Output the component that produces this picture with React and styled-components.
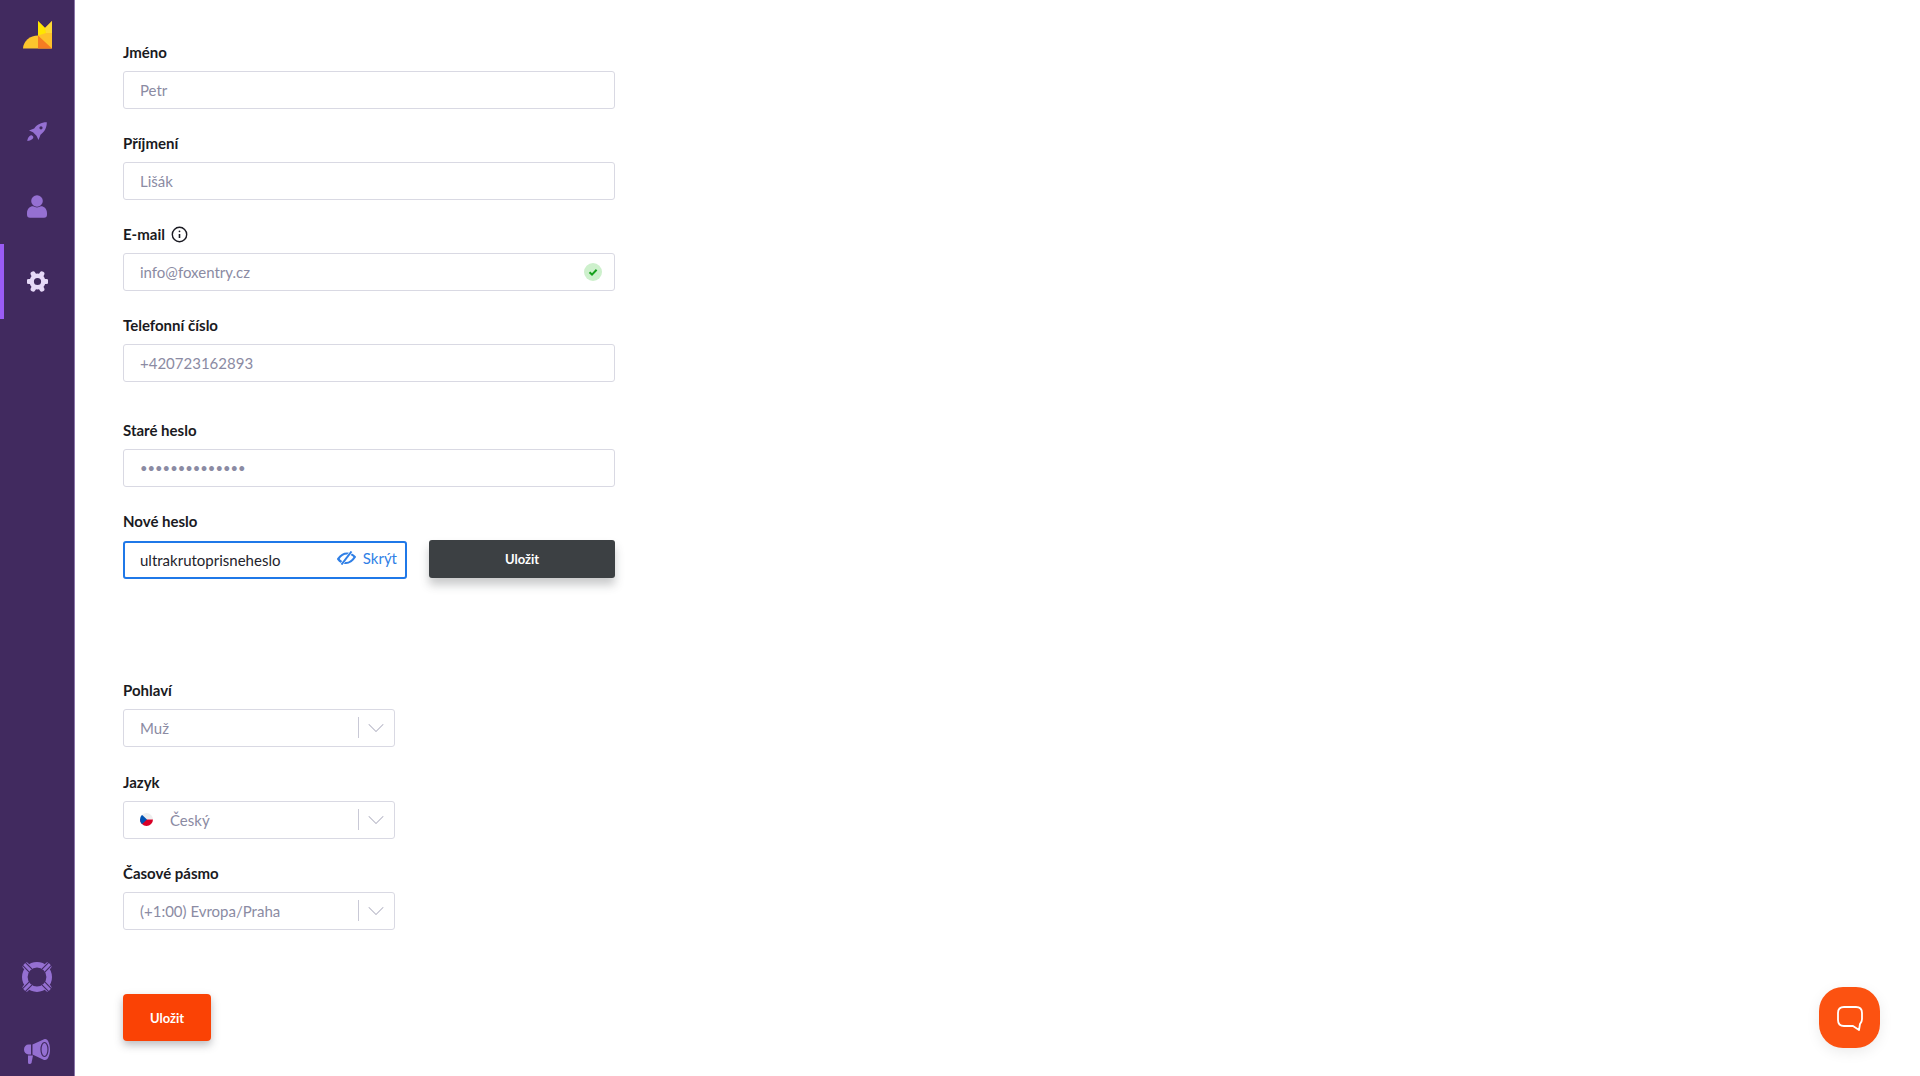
import React from 'react';
import styled, { createGlobalStyle } from 'styled-components';
import { ChevronDown } from 'lucide-react';

const GlobalStyle = createGlobalStyle`
  html, body {
    margin: 0;
    padding: 0;
    background: #fff;
    overflow: hidden;
  }
  * {
    box-sizing: border-box;
  }
`;

const Page = styled.div`
  display: flex;
  height: 1076px;
  overflow: hidden;
  font-family: 'Lato', 'Open Sans', sans-serif;
  position: relative;
`;

const Sidebar = styled.nav`
  width: 75px;
  height: 1089px;
  flex-shrink: 0;
  display: flex;
  flex-direction: column;
  background: #412a5f;
  border-right: 1px solid #8a75a8;
`;

const LogoBox = styled.div`
  height: 94px;
  padding: 21px 0 0 23px;
`;

const NavItem = styled.div`
  height: 75px;
  display: flex;
  align-items: center;
  justify-content: center;
  border-left: 4px solid ${(p) => (p.$active ? '#9a5cf5' : 'transparent')};
  padding-right: 4px;
`;

const NavBottom = styled.div`
  margin-top: auto;
`;

const Main = styled.main`
  flex: 1;
  padding: 42px 0 0 48px;
`;

const Group = styled.div`
  width: 492px;
`;

const Field = styled.div`
  margin-bottom: ${(p) => p.$gap || 23}px;
`;

const Label = styled.label`
  display: flex;
  align-items: center;
  gap: 6px;
  height: 20px;
  margin-bottom: 9px;
  font-size: 15px;
  font-weight: 700;
  color: #1a1a22;
`;

const InputBox = styled.div`
  height: 38px;
  width: ${(p) => p.$width || '100%'};
  display: flex;
  align-items: center;
  padding: 0 12px 1px ${(p) => (p.$focus ? 15 : 16)}px;
  background: #fff;
  border: ${(p) => (p.$focus ? '2px solid #1f78e8' : '1px solid #d9d9e3')};
  border-radius: 3px;
  font-size: 15px;
  color: ${(p) => (p.$focus ? '#23232b' : '#8b8ba3')};
`;

const Grow = styled.span`
  flex: 1;
`;

const Dots = styled.span`
  flex: 1;
  font-size: 13px;
  color: #8b8ba3;
`;

const ToggleText = styled.span`
  display: flex;
  align-items: center;
  gap: 7px;
  color: #2f7fe6;
  margin: -3px -4px 0 0;
`;

const PasswordRow = styled.div`
  display: flex;
  align-items: flex-end;
  justify-content: space-between;
`;

const DarkButton = styled.button`
  width: 186px;
  height: 38px;
  margin-bottom: 1px;
  border: none;
  border-radius: 3px;
  background: #3c4043;
  color: #fff;
  font: 700 13px 'Lato', sans-serif;
  box-shadow: 0 7px 10px rgba(60, 64, 67, 0.28);
`;

const SelectBox = styled(InputBox)`
  width: 272px;
  padding-right: 0;
`;

const FlagWrap = styled.span`
  display: flex;
  margin-right: 17px;
`;

const Divider = styled.span`
  width: 1px;
  height: 21px;
  background: #c9c9d6;
`;

const Arrow = styled.span`
  width: 35px;
  padding-right: 2px;
  display: flex;
  justify-content: center;
  color: #b4b4c4;
`;

const SaveButton = styled.button`
  width: 88px;
  height: 47px;
  border: none;
  border-radius: 4px;
  background: #fa4205;
  color: #fff;
  font: 700 13px 'Lato', sans-serif;
  box-shadow: 0 4px 9px rgba(60, 60, 70, 0.35);
`;

const ChatBubble = styled.div`
  position: absolute;
  left: 1819px;
  top: 987px;
  width: 61px;
  height: 61px;
  border-radius: 24px;
  background: #fc5211;
  display: flex;
  align-items: center;
  justify-content: center;
  box-shadow: 0 4px 14px rgba(0, 0, 0, 0.08);
`;

const Logo = () => (
  <svg width="30" height="28" viewBox="0 0 30 28">
    <path d="M0 27.5 A15 13.5 0 0 1 15 14.5 V27.5 Z" fill="#fcc52d" />
    <path d="M15 0 L22 7 L29 0 V27.5 H15 Z" fill="#fdc12a" />
    <path d="M15 0 L22 7 L23 12 L15 14.5 Z" fill="#ffe600" />
    <path d="M22 7 L29 0 V12 L23 12 Z" fill="#fdd835" />
    <path d="M15 14.5 L29 27.5 H15 Z" fill="#f57c22" />
  </svg>
);

const Rocket = () => (
  <svg width="20" height="21" viewBox="0 0 20 19" fill="#9570d2" fillRule="evenodd">
    <path d="M19.8 .3 C19.9 5.5 17.5 10 13.5 12.8 L11.5 18 L9.5 13.8 L6 10.3 L2 8.5 L7.2 6.5 C10 2.5 14.5 .2 19.8 .3 Z M14 4.2 A1.6 1.6 0 1 0 14 7.4 A1.6 1.6 0 1 0 14 4.2 Z" />
    <path d="M5 13.5 C6.5 14.5 6.8 15.6 5.5 17 C4 18.3 1.8 18.8 .3 19 C.4 17.4 1 15.6 2.4 14.2 C3.3 13.4 4.2 13.2 5 13.5 Z" />
  </svg>
);

const UserIcon = () => (
  <svg width="20" height="23" viewBox="0 0 20 23" fill="#9570d2">
    <circle cx="10" cy="6" r="5.8" />
    <path d="M0 18 C0 14 3 11.3 6 11.3 Q10 13.5 14 11.3 C17 11.3 20 14 20 18 V19.5 Q20 22.7 17 22.7 H3 Q0 22.7 0 19.5 Z" />
  </svg>
);

const Gear = () => (
  <svg width="21" height="21" viewBox="0 0 24 24" fill="none" stroke="#e6d9f7">
    {[0, 60, 120].map((angle) => (
      <path key={angle} d="M12 1.8 V22.2" strokeWidth="5.6" strokeLinecap="round" transform={`rotate(${angle + 90} 12 12)`} />
    ))}
    <circle cx="12" cy="12" r="6.6" fill="#412a5f" strokeWidth="5" />
  </svg>
);

const Lifebuoy = () => (
  <svg width="32" height="32" viewBox="0 0 32 32" fill="none">
    <circle cx="16" cy="16" r="12.2" stroke="#9570d2" strokeWidth="5.6" />
    {[45, 135, 225, 315].map((angle) => (
      <g key={angle} transform={`rotate(${angle} 16 16)`}>
        <rect x="12.5" y="-2.2" width="7" height="5" rx="2" fill="#9570d2" />
        <path d="M14 -3 V7 M18 -3 V7" stroke="#412a5f" strokeWidth="1.1" />
      </g>
    ))}
  </svg>
);

const Megaphone = () => (
  <svg width="26" height="25" viewBox="0 0 26 25" fill="#9570d2">
    <path d="M7 5.5 H4.5 A4.5 5 0 0 0 4.5 15.5 H7 Z" />
    <path d="M8.5 5.5 L19 .7 Q20 .2 21 .1 C24 0 26 5 26 10.5 C26 16 24 21 21 21 Q20 21 19 20.4 L8.5 15.5 Z" />
    <ellipse cx="20.5" cy="10.5" rx="3.5" ry="7" fill="none" stroke="#412a5f" strokeWidth="1.2" />
    <path d="M4 16.5 H9 L7.5 24 Q7 25 5.5 25 Q4 25 4 23.5 Z" />
  </svg>
);

const Info = () => (
  <svg width="17" height="17" viewBox="0 0 17 17" fill="none" stroke="#1a1a22" strokeWidth="1.4">
    <circle cx="8.5" cy="8.5" r="7.2" />
    <path d="M8.5 8 V12" strokeWidth="1.6" />
    <circle cx="8.5" cy="5.3" r="0.9" fill="#1a1a22" stroke="none" />
  </svg>
);

const CheckBadge = () => (
  <svg width="18" height="18" viewBox="0 0 18 18" fill="none">
    <circle cx="9" cy="9" r="9" fill="#cdf0cc" />
    <path d="M5.5 9.3 L8 11.6 L12.6 6.8" stroke="#16a01c" strokeWidth="2" />
  </svg>
);

const EyeOff = () => (
  <svg width="19" height="14" viewBox="0 0 19 14" fill="none" stroke="#2f7fe6" strokeWidth="2.2">
    <path d="M1.2 8 Q5 2.5 10 2.5 Q15 2.5 17.8 6 Q14 12 9 12 Q4 12 1.2 8 Z" />
    <path d="M4.5 13.5 L14.5 .5" stroke="#fff" strokeWidth="3" />
    <path d="M4.5 13.5 L14.5 .5" strokeWidth="2" />
  </svg>
);

const CzechFlag = () => (
  <svg width="13" height="13" viewBox="0 0 13 13">
    <clipPath id="flagClip">
      <circle cx="6.5" cy="6.5" r="6.5" />
    </clipPath>
    <g clipPath="url(#flagClip)">
      <rect width="13" height="6.5" fill="#eeeeee" />
      <rect y="6.5" width="13" height="6.5" fill="#d80027" />
      <path d="M0 0 L7 6.5 L0 13 Z" fill="#0052b4" />
    </g>
  </svg>
);

const ChatIcon = () => (
  <svg width="28" height="28" viewBox="0 0 28 28" fill="none" stroke="#fff" strokeWidth="1.8" strokeLinejoin="round">
    <path d="M8 3 H20 Q26 3 26 9 V15 Q26 18 24 20 L23 26 L17 22 H8 Q2 22 2 16 V9 Q2 3 8 3 Z" />
  </svg>
);

const Select = ({ flag, children }) => (
  <SelectBox>
    {flag && (
      <FlagWrap>
        <CzechFlag />
      </FlagWrap>
    )}
    <Grow>{children}</Grow>
    <Divider />
    <Arrow>
      <ChevronDown size={28} strokeWidth={0.9} />
    </Arrow>
  </SelectBox>
);

const App = () => (
  <Page>
    <GlobalStyle />
    <Sidebar>
      <LogoBox>
        <Logo />
      </LogoBox>
      <NavItem>
        <Rocket />
      </NavItem>
      <NavItem>
        <UserIcon />
      </NavItem>
      <NavItem $active>
        <Gear />
      </NavItem>
      <NavBottom>
        <NavItem>
          <Lifebuoy />
        </NavItem>
        <NavItem>
          <Megaphone />
        </NavItem>
      </NavBottom>
    </Sidebar>
    <Main>
      <Group>
        <Field $gap={24}>
          <Label>Jméno</Label>
          <InputBox>Petr</InputBox>
        </Field>
        <Field $gap={24}>
          <Label>Příjmení</Label>
          <InputBox>Lišák</InputBox>
        </Field>
        <Field $gap={24}>
          <Label>
            E-mail <Info />
          </Label>
          <InputBox>
            <Grow>info@foxentry.cz</Grow>
            <CheckBadge />
          </InputBox>
        </Field>
        <Field $gap={38}>
          <Label>Telefonní číslo</Label>
          <InputBox>+420723162893</InputBox>
        </Field>
        <Field $gap={24}>
          <Label>Staré heslo</Label>
          <InputBox>
            <Dots>••••••••••••••</Dots>
          </InputBox>
        </Field>
        <Field $gap={101}>
          <Label>Nové heslo</Label>
          <PasswordRow>
            <InputBox $focus $width="284px">
              <Grow>ultrakrutoprisneheslo</Grow>
              <ToggleText>
                <EyeOff /> Skrýt
              </ToggleText>
            </InputBox>
            <DarkButton>Uložit</DarkButton>
          </PasswordRow>
        </Field>
        <Field $gap={25}>
          <Label>Pohlaví</Label>
          <Select>Muž</Select>
        </Field>
        <Field $gap={24}>
          <Label>Jazyk</Label>
          <Select flag>Český</Select>
        </Field>
        <Field $gap={64}>
          <Label>Časové pásmo</Label>
          <Select>(+1:00) Evropa/Praha</Select>
        </Field>
        <SaveButton>Uložit</SaveButton>
      </Group>
    </Main>
    <ChatBubble>
      <ChatIcon />
    </ChatBubble>
  </Page>
);

export default App;
